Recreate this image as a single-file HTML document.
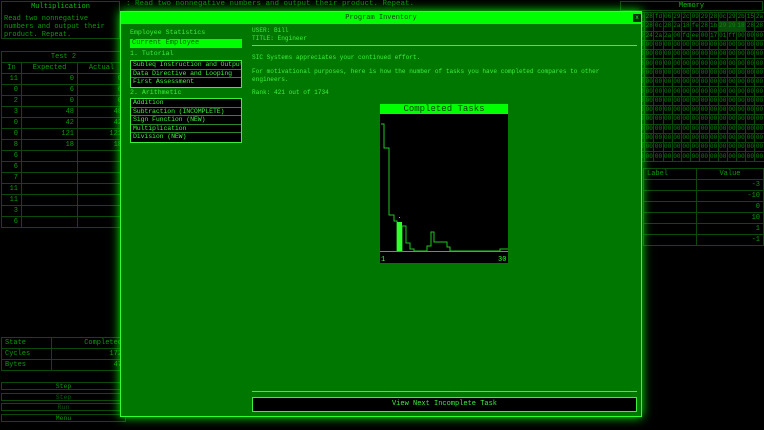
<!DOCTYPE html>
<html><head><meta charset="utf-8"><style>
*{margin:0;padding:0;box-sizing:border-box}
body{width:764px;height:430px;background:#000;overflow:hidden;position:relative;font-family:"Liberation Mono","DejaVu Sans Mono",monospace;font-size:7px;color:#0c9a0c}
.a{position:absolute}
.b{border:1px solid #0b4a0b}
table{border-collapse:collapse;position:absolute}
td{border:1px solid #0b4a0b;height:11px;padding:0 3px;font-size:7px;line-height:9px;white-space:nowrap}
.mem{table-layout:fixed}
.mem td{height:9.3px;width:9.2px;padding:0;font-size:6px;line-height:8px;color:#0a8a0a;text-align:center;overflow:hidden}
.modal{left:120px;top:11px;width:522px;height:406px;background:#007800;border:1px solid #30ff30;box-shadow:0 0 10px #00ff00}
.mt{left:0;top:0;width:520px;height:12px;background:#00ff00;color:#004000;text-align:center;line-height:12px;font-size:7px}
.g{color:#3cf03c;white-space:nowrap;font-size:6.1px}
.list{border:1px solid #3cf03c;background:#000}
.list div{height:8.6px;border-bottom:1px solid #2a8a2a;color:#3cf03c;padding-left:2px;line-height:8px;font-size:6.6px;white-space:nowrap;overflow:hidden;letter-spacing:-0.15px}
.list div:last-child{border-bottom:none}
.btn{border:1px solid #0b4a0b;height:8px;text-align:center;line-height:7px;font-size:6.5px}
</style></head><body>
<!-- left -->
<div class="a b" style="left:1px;top:1px;width:119px;height:38px"></div>
<div class="a" style="left:1px;top:3px;width:119px;text-align:center;color:#0fbf0f">Multiplication</div>
<div class="a" style="left:4px;top:15px;width:116px;line-height:8px">Read two nonnegative numbers and output their product. Repeat.</div>
<div class="a" style="left:126px;top:0px;white-space:nowrap;color:#0a8a0a;font-size:7.5px">: Read two nonnegative numbers and output their product. Repeat.</div>
<table style="left:1px;top:51px;width:125px">
<tr><td colspan="3" style="text-align:center">Test 2</td></tr>
<tr><td style="width:20px;text-align:center">In</td><td style="width:56px;text-align:center">Expected</td><td style="text-align:center">Actual</td></tr>
<tr><td style="text-align:right">11</td><td style="text-align:right">0</td><td style="text-align:right">0</td></tr>
<tr><td style="text-align:right">0</td><td style="text-align:right">6</td><td style="text-align:right">6</td></tr>
<tr><td style="text-align:right">2</td><td style="text-align:right">0</td><td style="text-align:right">0</td></tr>
<tr><td style="text-align:right">3</td><td style="text-align:right">48</td><td style="text-align:right">48</td></tr>
<tr><td style="text-align:right">0</td><td style="text-align:right">42</td><td style="text-align:right">42</td></tr>
<tr><td style="text-align:right">0</td><td style="text-align:right">121</td><td style="text-align:right">121</td></tr>
<tr><td style="text-align:right">8</td><td style="text-align:right">18</td><td style="text-align:right">18</td></tr>
<tr><td style="text-align:right">6</td><td></td><td></td></tr>
<tr><td style="text-align:right">6</td><td></td><td></td></tr>
<tr><td style="text-align:right">7</td><td></td><td></td></tr>
<tr><td style="text-align:right">11</td><td></td><td></td></tr>
<tr><td style="text-align:right">11</td><td></td><td></td></tr>
<tr><td style="text-align:right">3</td><td></td><td></td></tr>
<tr><td style="text-align:right">6</td><td></td><td></td></tr>
</table>
<table style="left:1px;top:337px;width:125px">
<tr><td style="width:50px">State</td><td style="text-align:right">Completed</td></tr>
<tr><td>Cycles</td><td style="text-align:right">172</td></tr>
<tr><td>Bytes</td><td style="text-align:right">47</td></tr>
</table>
<div class="a btn" style="left:1px;top:382px;width:125px">Step</div>
<div class="a btn" style="left:1px;top:393px;width:125px;color:#0a5a0a">Step</div>
<div class="a btn" style="left:1px;top:403px;width:125px;color:#0a5a0a">Run</div>
<div class="a btn" style="left:1px;top:414px;width:125px">Menu</div>
<!-- right memory -->
<div class="a b" style="left:620px;top:1px;width:143px;height:10px;text-align:center;line-height:9px;color:#0fbf0f">Memory</div>
<table class="mem" style="left:635px;top:12px;width:129px">
<tr><td>00</td><td>28</td><td>fd</td><td>06</td><td>29</td><td>2c</td><td>09</td><td>29</td><td>28</td><td>0c</td><td>29</td><td>2b</td><td>15</td><td>2a</td></tr>
<tr><td>00</td><td>28</td><td>0c</td><td>28</td><td>2a</td><td>18</td><td>fe</td><td>28</td><td>1b</td><td style="background:#0a4a0a">29</td><td style="background:#0a4a0a">29</td><td style="background:#0a4a0a">18</td><td>28</td><td>28</td></tr>
<tr><td>00</td><td>24</td><td>2a</td><td>2a</td><td>00</td><td>fd</td><td>ee</td><td>00</td><td>17</td><td>01</td><td>ff</td><td>00</td><td>00</td><td>00</td></tr>
<tr><td>00</td><td>00</td><td>00</td><td>00</td><td>00</td><td>00</td><td>00</td><td>00</td><td>00</td><td>00</td><td>00</td><td>00</td><td>00</td><td>00</td></tr>
<tr><td>00</td><td>00</td><td>00</td><td>00</td><td>00</td><td>00</td><td>00</td><td>00</td><td>00</td><td>00</td><td>00</td><td>00</td><td>00</td><td>00</td></tr>
<tr><td>00</td><td>00</td><td>00</td><td>00</td><td>00</td><td>00</td><td>00</td><td>00</td><td>00</td><td>00</td><td>00</td><td>00</td><td>00</td><td>00</td></tr>
<tr><td>00</td><td>00</td><td>00</td><td>00</td><td>00</td><td>00</td><td>00</td><td>00</td><td>00</td><td>00</td><td>00</td><td>00</td><td>00</td><td>00</td></tr>
<tr><td>00</td><td>00</td><td>00</td><td>00</td><td>00</td><td>00</td><td>00</td><td>00</td><td>00</td><td>00</td><td>00</td><td>00</td><td>00</td><td>00</td></tr>
<tr><td>00</td><td>00</td><td>00</td><td>00</td><td>00</td><td>00</td><td>00</td><td>00</td><td>00</td><td>00</td><td>00</td><td>00</td><td>00</td><td>00</td></tr>
<tr><td>00</td><td>00</td><td>00</td><td>00</td><td>00</td><td>00</td><td>00</td><td>00</td><td>00</td><td>00</td><td>00</td><td>00</td><td>00</td><td>00</td></tr>
<tr><td>00</td><td>00</td><td>00</td><td>00</td><td>00</td><td>00</td><td>00</td><td>00</td><td>00</td><td>00</td><td>00</td><td>00</td><td>00</td><td>00</td></tr>
<tr><td>00</td><td>00</td><td>00</td><td>00</td><td>00</td><td>00</td><td>00</td><td>00</td><td>00</td><td>00</td><td>00</td><td>00</td><td>00</td><td>00</td></tr>
<tr><td>00</td><td>00</td><td>00</td><td>00</td><td>00</td><td>00</td><td>00</td><td>00</td><td>00</td><td>00</td><td>00</td><td>00</td><td>00</td><td>00</td></tr>
<tr><td>00</td><td>00</td><td>00</td><td>00</td><td>00</td><td>00</td><td>00</td><td>00</td><td>00</td><td>00</td><td>00</td><td>00</td><td>00</td><td>00</td></tr>
<tr><td>00</td><td>00</td><td>00</td><td>00</td><td>00</td><td>00</td><td>00</td><td>00</td><td>00</td><td>00</td><td>00</td><td>00</td><td>00</td><td>00</td></tr>
<tr><td>00</td><td>00</td><td>00</td><td>00</td><td>00</td><td>00</td><td>00</td><td>00</td><td>00</td><td>00</td><td>00</td><td>00</td><td>00</td><td>00</td></tr>
</table>
<table style="left:643px;top:168px;width:121px">
<tr><td style="width:53px">Label</td><td style="text-align:center">Value</td></tr>
<tr><td></td><td style="text-align:right">-3</td></tr>
<tr><td></td><td style="text-align:right">-10</td></tr>
<tr><td></td><td style="text-align:right">0</td></tr>
<tr><td></td><td style="text-align:right">10</td></tr>
<tr><td></td><td style="text-align:right">1</td></tr>
<tr><td></td><td style="text-align:right">-1</td></tr>
</table>
<!-- modal -->
<div class="a modal">
<div class="a mt">Program Inventory</div>
<div class="a" style="left:512px;top:2px;width:8px;height:8px;background:#003000;color:#3cf03c;font-size:6px;text-align:center;line-height:8px">x</div>
<div class="a g" style="left:9px;top:17px;font-size:6.6px">Employee Statistics</div>
<div class="a" style="left:9px;top:27px;width:112px;height:9px;background:#00ff00;color:#006000;padding-left:2px;line-height:9px">Current Employee</div>
<div class="a g" style="left:9px;top:38px;font-size:6.6px">1. Tutorial</div>
<div class="a list" style="left:9px;top:48px;width:112px"><div>Subleq Instruction and Output</div><div>Data Directive and Looping</div><div>First Assessment</div></div>
<div class="a g" style="left:9px;top:77px;font-size:6.6px">2. Arithmetic</div>
<div class="a list" style="left:9px;top:86px;width:112px"><div>Addition</div><div>Subtraction (INCOMPLETE)</div><div>Sign Function (NEW)</div><div>Multiplication</div><div>Division (NEW)</div></div>
<div class="a g" style="left:131px;top:15px;line-height:8px">USER: Bill<br>TITLE: Engineer</div>
<div class="a" style="left:131px;top:33px;width:385px;height:1px;background:#3cf03c"></div>
<div class="a g" style="left:131px;top:42px">SIC Systems appreciates your continued effort.</div>
<div class="a g" style="left:131px;top:56px;line-height:8px">For motivational purposes, here is how the number of tasks you have completed compares to other<br>engineers.</div>
<div class="a g" style="left:131px;top:77px">Rank: 421 out of 1734</div>
<div class="a" style="left:259px;top:92px;width:128px;height:159px;background:#000">
<div style="height:10px;background:#00ff00;color:#004000;text-align:center;font-size:9px;line-height:10px">Completed Tasks</div>
<svg class="a" style="left:0;top:0" width="128" height="159" viewBox="380 103 128 159">
<polyline fill="none" stroke="#1ec81e" stroke-width="1" points="381,123 384,123 384,147 389,147 389,214 394,214 394,220 397,220 397,250 402,250 402,225 406,225 406,242 410,242 410,248 414,248 414,250 427,250 427,245 431,245 431,231 434,231 434,241 447,241 447,246 450,246 450,250 500,250 500,248 508,248"/>
<rect x="397" y="221" width="5" height="29" fill="#30ff30"/>
<rect x="399" y="216" width="1" height="1" fill="#30ff30"/>
<line x1="380" y1="250.5" x2="508" y2="250.5" stroke="#1ec81e"/>
<text x="381" y="260" fill="#30ff30" font-size="7" font-family="Liberation Mono">1</text>
<text x="498" y="260" fill="#30ff30" font-size="7" font-family="Liberation Mono">30</text>
</svg>
</div>
<div class="a" style="left:131px;top:379px;width:385px;height:1px;background:#3cf03c"></div>
<div class="a" style="left:131px;top:385px;width:385px;height:15px;background:#000;border:1px solid #3cf03c;color:#3cf03c;text-align:center;line-height:13px">View Next Incomplete Task</div>
</div>
</body></html>
